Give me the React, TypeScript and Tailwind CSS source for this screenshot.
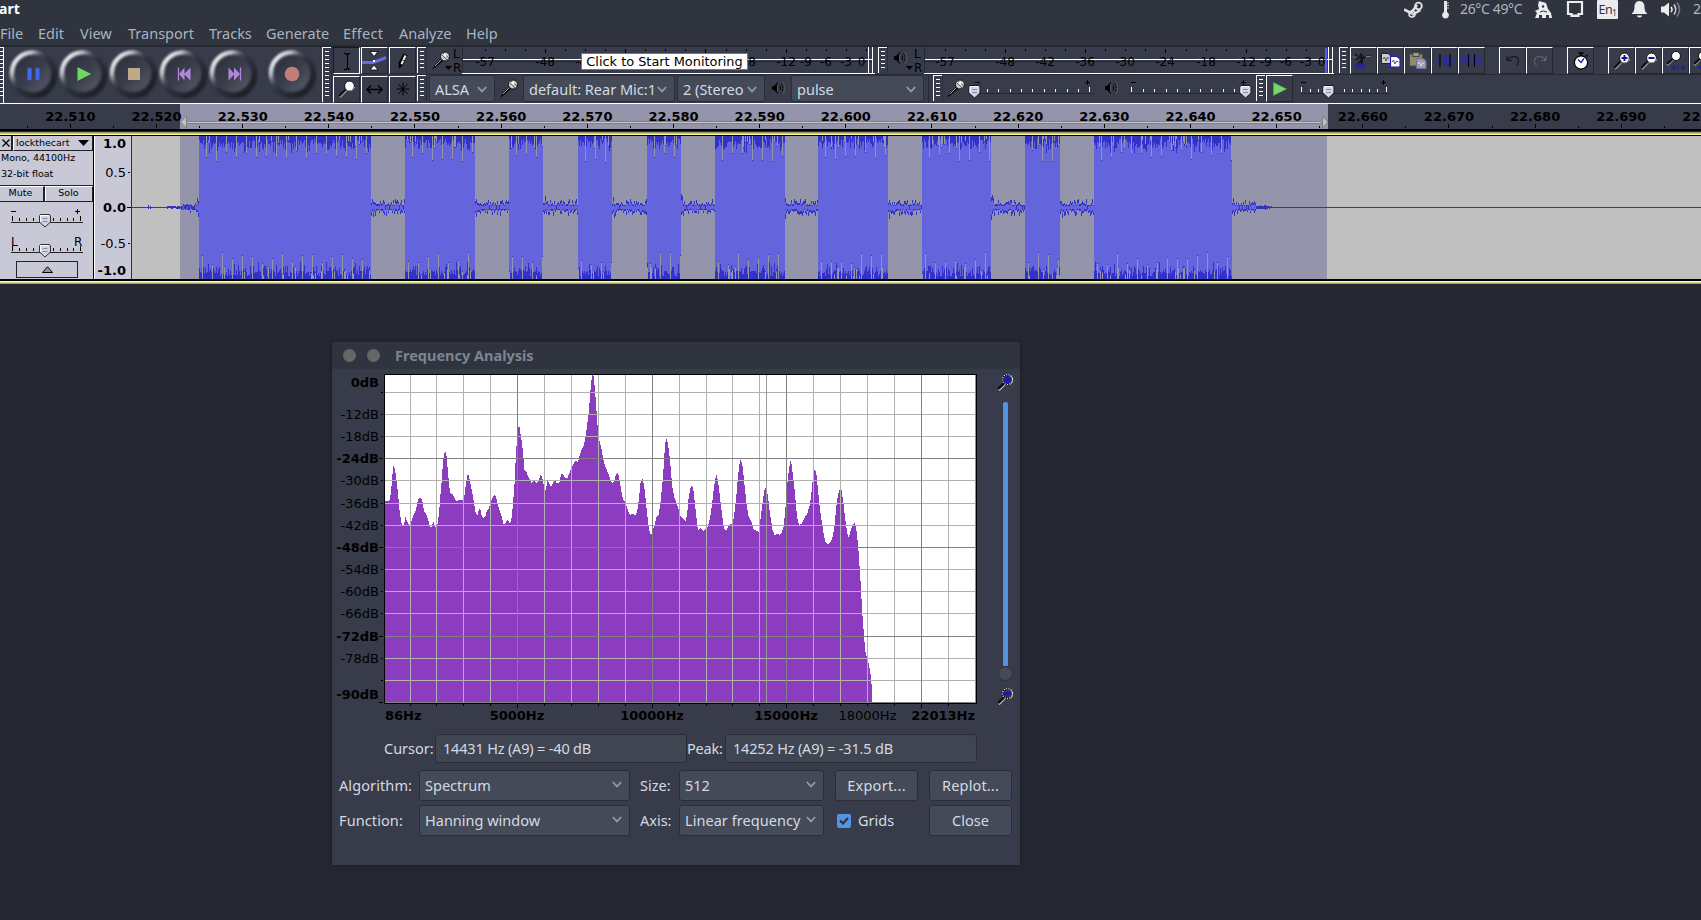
import React from "react";

const UI = "font-['Noto_Sans',sans-serif]";
const DV = "font-['DejaVu_Sans',sans-serif]";

/* ---------- helpers ---------- */

function rng(seed: number) {
  let s = seed;
  return () => {
    s = (s * 1664525 + 1013904223) % 4294967296;
    return s / 4294967296;
  };
}

function Grip({ tall = false }: { tall?: boolean }) {
  const n = tall ? 12 : 5;
  return (
    <svg width="10" height={tall ? 55 : 27} className="shrink-0" shapeRendering="crispEdges">
      <path d={`M0 0H9V1H1V${tall ? 55 : 26}H0Z`} fill="#fff" />
      {Array.from({ length: n }, (_, i) => (
        <rect key={i} x="3" y={4 + i * 4} width="4" height="1" fill="#fff" />
      ))}
      <rect x="9" y="0" width="1" height={tall ? 55 : 26} fill="#2a2d37" />
    </svg>
  );
}

function Tile({ children, pressed = false }: { children?: React.ReactNode; pressed?: boolean }) {
  return (
    <div
      className={
        pressed
          ? "flex h-[27px] w-[27px] shrink-0 items-center justify-center border border-t-[#15171d] border-l-[#15171d] border-r-white border-b-white"
          : "flex h-[27px] w-[27px] shrink-0 items-center justify-center border border-t-white border-l-white border-r-[#252831] border-b-[#252831]"
      }
    >
      {children}
    </div>
  );
}

/* ---------- icons ---------- */

function MicIcon() {
  return (
    <svg width="20" height="20" viewBox="0 0 20 20" className="shrink-0">
      <path d="M1 19L4 14L11 7L13 9L6 15Z" fill="#000" />
      <path d="M4 15L11 8" stroke="#a8a8a8" strokeWidth="1" />
      <circle cx="14" cy="5.500" r="4.500" fill="#cfcfcf" stroke="#111" strokeWidth="1" />
      <path d="M11 4L16 9M12 2L18 7" stroke="#555" strokeWidth="1" />
      <circle cx="14" cy="4" r="1.500" fill="#fff" />
    </svg>
  );
}

function SpeakerIcon() {
  return (
    <svg width="14" height="14" viewBox="0 0 14 14" className="shrink-0">
      <path d="M0 5H2L6 1V13L2 9H0Z" fill="#000" />
      <path d="M5.500 3V11" stroke="#6a6a6a" strokeWidth="0.800" />
      <path d="M8 4.500Q9.200 7 8 9.500" stroke="#000" strokeWidth="0.900" fill="none" />
      <path d="M9.500 2.500Q12.500 7 9.500 11.500" stroke="#000" strokeWidth="1" fill="none" strokeDasharray="2 1" />
      <path d="M11 1Q14.500 7 11 13" stroke="#8a8a8a" strokeWidth="0.700" fill="none" strokeDasharray="1 1" />
    </svg>
  );
}

function Magnifier({ sign = "" }: { sign?: "+" | "-" | "" }) {
  return (
    <svg width="18" height="18" viewBox="0 0 18 18" className="shrink-0">
      <path d="M1.500 16.500L8 10" stroke="#9a9a9a" strokeWidth="3.200" />
      <path d="M1 16L8 9" stroke="#0a0a0a" strokeWidth="2.200" />
      <circle cx="11.500" cy="6" r="4.900" fill="#fff" stroke="#111" strokeWidth="1" />
      <path d="M7.500 9A5.500 5.500 0 0 0 16.800 7" stroke="#bbb" strokeWidth="0.800" fill="none" />
      {sign === "+" && <path d="M8.500 6H14.500M11.500 3V9" stroke="#1414a0" strokeWidth="2" />}
      {sign === "-" && <path d="M8.500 6H14.500" stroke="#1414a0" strokeWidth="2" />}
    </svg>
  );
}

function DarkMagnifier({ plus = false }: { plus?: boolean }) {
  return (
    <svg width="17" height="17" viewBox="0 0 17 17" className="shrink-0">
      <path d="M1.500 16L8 9.500" stroke="#c8c4bc" strokeWidth="3" />
      <path d="M1 15L8 8.500" stroke="#0d0d12" strokeWidth="2.400" />
      <circle cx="10.500" cy="5.500" r="5" fill="#33364a" stroke="#101014" strokeWidth="1.200" />
      <circle cx="10.500" cy="5.500" r="5" fill="none" stroke="#f0f0f0" strokeWidth="1.200" strokeDasharray="1 1.400" />
      <path d="M13.500 1.500A5.500 5.500 0 0 1 13 10.500" stroke="#d8d4c8" strokeWidth="1" fill="none" />
      <path d={plus ? "M7 5.500H14M10.500 2V9" : "M7 5.500H14"} stroke="#1a1aa8" strokeWidth="3" />
    </svg>
  );
}

function Chevron() {
  return (
    <svg width="10" height="7" viewBox="0 0 10 7" className="shrink-0">
      <path d="M0.800 1L5 5.400L9.200 1" stroke="#979aa6" strokeWidth="1.700" fill="none" />
    </svg>
  );
}

function PlayTriangle() {
  return (
    <svg width="14" height="14" viewBox="0 0 14 14">
      <path d="M0.500 0.500L13.500 7L0.500 13.500Z" fill="#76d66c" stroke="#4fb048" strokeWidth="0.500" />
    </svg>
  );
}

/* ---------- title and menu ---------- */

const MENU = [
  { t: "File", c: "w-[38px]" },
  { t: "Edit", c: "w-[42px]" },
  { t: "View", c: "w-[48px]" },
  { t: "Transport", c: "w-[81px]" },
  { t: "Tracks", c: "w-[57px]" },
  { t: "Generate", c: "w-[77px]" },
  { t: "Effect", c: "w-[56px] tracking-[0.3px]" },
  { t: "Analyze", c: "w-[67px]" },
  { t: "Help", c: "w-[40px]" },
];

function TitleBar() {
  return (
    <div className={`${UI} flex h-[20px] items-center leading-[18px]`}>
      <span className="-ml-px w-[1406px] pb-[2px] text-[14px] font-bold text-white">art</span>
      <svg width="21" height="18" viewBox="0 0 21 18" className="mr-[17px] shrink-0">
        <path d="M0 8.500L7 12L13 4" stroke="#dcdde0" strokeWidth="2.600" fill="none" />
        <circle cx="14.500" cy="5" r="3.300" fill="none" stroke="#e6e6e8" strokeWidth="1.800" />
        <path d="M8 14L16.500 9" stroke="#dcdde0" strokeWidth="2.600" />
        <circle cx="8" cy="13" r="3" fill="none" stroke="#e6e6e8" strokeWidth="1.500" />
      </svg>
      <svg width="8" height="18" viewBox="0 0 8 18" className="mr-[10px] shrink-0">
        <path d="M2 0H5V11A3.400 3.400 0 1 1 2 11Z" fill="#e8e8ea" />
        <path d="M5 2H7M5 4.500H7M5 7H7" stroke="#e8e8ea" strokeWidth="0.800" />
      </svg>
      <span className="w-[74px] shrink-0 whitespace-nowrap pb-[2px] text-[14px] tracking-[-0.35px] text-[#aeb5c0]">26°C 49°C</span>
      <svg width="19" height="18" viewBox="0 0 19 18" className="mr-[13px] shrink-0">
        <path d="M5 0L12 2L14 8L17 12L18 17H15V14H12V17H8V14H5V17H1L3 12L1 10L5 8L4 4Z" fill="#ececee" />
        <circle cx="9" cy="5.500" r="1.200" fill="#2f343f" />
        <path d="M6 11Q9 9 13 11" stroke="#2f343f" fill="none" />
      </svg>
      <svg width="18" height="18" viewBox="0 0 18 18" className="mr-[13px] shrink-0">
        <path d="M2 1H16V13H12.500V15H5.500V13H2Z" fill="none" stroke="#ececee" strokeWidth="2.200" />
        <path d="M6 13.500H12V16H6Z" fill="#ececee" />
      </svg>
      <span className="mb-px mr-[13px] flex h-[19px] w-[21px] shrink-0 items-center justify-center rounded-[1px] bg-[#ececee] text-[12.5px] tracking-[-0.4px] text-[#2f343f]">
        En<span className="pt-[6px] text-[8px]">1</span>
      </span>
      <svg width="17" height="18" viewBox="0 0 17 18" className="mr-[13px] shrink-0">
        <path d="M8.500 0C12 0 13.500 3 13.500 6C13.500 10 15 11.500 16.500 13H0.500C2 11.500 3.500 10 3.500 6C3.500 3 5 0 8.500 0Z" fill="#ececee" />
        <path d="M6 14.500H11A2.500 2 0 0 1 6 14.500Z" fill="#ececee" />
      </svg>
      <svg width="21" height="18" viewBox="0 0 21 18" className="mr-[11px] shrink-0">
        <path d="M0 5.500H3L8 1.500V15.500L3 11.500H0Z" fill="#ececee" />
        <path d="M10 6Q12 8.500 10 11" stroke="#ececee" strokeWidth="1.600" fill="none" />
        <path d="M13 3.500Q16.500 8.500 13 13.500" stroke="#c8cacf" strokeWidth="1.600" fill="none" />
        <path d="M16 1.500Q21 8.500 16 15.500" stroke="#777b85" strokeWidth="1.600" fill="none" />
      </svg>
      <span className="shrink-0 pb-[2px] text-[14px] text-[#aeb5c0]">2</span>
    </div>
  );
}

/* ---------- transport ---------- */

function RoundButton({ children, last = false }: { children: React.ReactNode; last?: boolean }) {
  return (
    <svg width="50" height="55" viewBox="0 0 50 55" className={last ? "ml-[9px] shrink-0" : "shrink-0"}>
      <circle cx="25.500" cy="27.500" r="21" fill="none" stroke="url(#rimDark)" strokeWidth="6" filter="url(#soft)" />
      <circle cx="24.500" cy="26.500" r="18" fill="url(#face)" filter="url(#soft)" />
      <circle cx="24.500" cy="26" r="20.500" fill="none" stroke="url(#rimLight)" strokeWidth="4.500" filter="url(#soft)" />
      {children}
    </svg>
  );
}

function Transport() {
  return (
    <div className="flex w-[311px] shrink-0">
      <svg width="0" height="0" className="absolute">
        <defs>
          <filter id="soft" x="-20%" y="-20%" width="140%" height="140%">
            <feGaussianBlur stdDeviation="0.900" />
          </filter>
          <linearGradient id="rimLight" x1="0.080" y1="0.120" x2="0.700" y2="0.700">
            <stop offset="0" stopColor="#f4f4f4" />
            <stop offset="0.250" stopColor="#c0c1c6" />
            <stop offset="0.500" stopColor="#555966" stopOpacity="0.500" />
            <stop offset="0.700" stopColor="#383c4a" stopOpacity="0" />
          </linearGradient>
          <linearGradient id="rimDark" x1="0.200" y1="0.200" x2="0.850" y2="0.850">
            <stop offset="0" stopColor="#383c4a" stopOpacity="0" />
            <stop offset="0.500" stopColor="#2e313c" />
            <stop offset="1" stopColor="#1f2129" />
          </linearGradient>
          <linearGradient id="face" x1="0.150" y1="0.150" x2="0.850" y2="0.850">
            <stop offset="0" stopColor="#30333f" />
            <stop offset="0.500" stopColor="#383c4a" />
            <stop offset="1" stopColor="#50545f" />
          </linearGradient>
        </defs>
      </svg>
      <RoundButton>
        <path d="M19.500 21H23.500V33H19.500ZM27.500 21H31.500V33H27.500Z" fill="#4169f0" stroke="#3555b8" strokeWidth="1" />
      </RoundButton>
      <RoundButton>
        <path d="M19.500 20L33 27L19.500 34Z" fill="#6fd664" />
      </RoundButton>
      <RoundButton>
        <path d="M20 21H32V33H20Z" fill="#bcab86" />
      </RoundButton>
      <RoundButton>
        <path d="M20.500 20.500V33.500" stroke="#b385dc" strokeWidth="1.300" />
        <path d="M26.500 20.500V33.500L21 27ZM32.500 20.500V33.500L26 27Z" fill="#b385dc" />
      </RoundButton>
      <RoundButton>
        <path d="M32.500 20.500V33.500" stroke="#b385dc" strokeWidth="1.300" />
        <path d="M20.500 20.500V33.500L26.500 27ZM26 20.500V33.500L32 27Z" fill="#b385dc" />
      </RoundButton>
      <RoundButton last>
        <circle cx="25" cy="27" r="7.300" fill="#c07d7a" />
      </RoundButton>
    </div>
  );
}

function Tools() {
  return (
    <div className="ml-px grid w-[84px] shrink-0 grid-cols-3 grid-rows-2 gap-y-px">
      <Tile pressed>
        <svg width="8" height="18" viewBox="0 0 8 18" shapeRendering="crispEdges">
          <path d="M1 1H3V2H5V1H7M1 17H3V16H5V17H7" stroke="#000" fill="none" />
          <path d="M4 2V16" stroke="#000" />
        </svg>
      </Tile>
      <Tile>
        <svg width="25" height="20" viewBox="0 0 25 20">
          <path d="M0 11.500H11L18 9L24 6.500" stroke="#6a6ae0" strokeWidth="3" fill="none" />
          <path d="M8 0.500H16L12 5.500ZM8 19L12 14L16 19Z" fill="#fff" stroke="#000" strokeWidth="0.800" />
          <rect x="11" y="9" width="2" height="2" fill="#fff" />
        </svg>
      </Tile>
      <Tile>
        <svg width="12" height="18" viewBox="0 0 12 18">
          <path d="M2 17L1.500 11L6.500 1.500L10.500 3.500L6 13Z" fill="#000" />
          <path d="M3.500 12L7.500 3L9.500 4L5.500 12.500Z" fill="#f0f0f0" />
          <path d="M5.500 8L7.500 9" stroke="#000" strokeWidth="0.800" />
        </svg>
      </Tile>
      <Tile>
        <Magnifier />
      </Tile>
      <Tile>
        <svg width="17" height="9" viewBox="0 0 17 9">
          <path d="M1 4.500H16M5 0.500L1 4.500L5 8.500M12 0.500L16 4.500L12 8.500" stroke="#000" strokeWidth="1.500" fill="none" />
        </svg>
      </Tile>
      <Tile>
        <svg width="14" height="14" viewBox="0 0 14 14">
          <path d="M7 0.500V13.500M0.500 7H13.500M2.500 2L11.500 12M11.500 2L2.500 12" stroke="#000" strokeWidth="1" />
        </svg>
      </Tile>
    </div>
  );
}

/* ---------- meters ---------- */

function Meter({ zero, width, clip = false }: { zero: number; width: number; clip?: boolean }) {
  const dbs = Array.from({ length: 20 }, (_, i) => -57 + i * 3);
  const labels = [-57, -48, -42, -36, -30, -24, -18, -12, -9, -6, -3, 0];
  return (
    <svg width={width} height="27" className="shrink-0">
      <g shapeRendering="crispEdges">
        <rect x="0" y="0" width="1" height="26" fill="#262932" />
        <rect x="1" y="12" width={width - 5} height="1" fill="#fff" />
        <rect x="1" y="14" width={width - 5} height="1" fill="#24272f" />
        <rect x="0" y="26" width={width - 2} height="1" fill="#fff" />
        {dbs.map((d) => (
          <rect key={d} x={Math.round(zero + d * 6.69)} y="2" width="1" height={d % 12 === 0 && d !== 0 ? 4 : 2} fill="#000" />
        ))}
        {clip && <rect x={zero - 1} y="1" width="2" height="25" fill="#5c5cf0" />}
        <rect x={zero + 2} y="0" width="1" height="27" fill="#fff" />
        <rect x={zero + 6} y="0" width="1" height="27" fill="#fff" />
      </g>
      {labels.map((d) => (
        <text
          key={d}
          x={d === 0 ? zero - 0.5 : Math.round(zero + d * 6.69)}
          y="18.500"
          textAnchor={d === 0 ? "end" : "middle"}
          className="fill-black font-['DejaVu_Sans',sans-serif] text-[12px]"
        >
          {d}
        </text>
      ))}
    </svg>
  );
}

function MeterButton({ kind }: { kind: "mic" | "speaker" }) {
  return (
    <div className={kind === "mic" ? "flex w-[35px] shrink-0" : "flex w-[36px] shrink-0"}>
      <div className="flex w-[25px] flex-col items-end pt-[4px]">
        <div className={kind === "mic" ? "mr-[1px] h-[15px]" : "mr-[5px] h-[15px]"}>{kind === "mic" ? <MicIcon /> : <SpeakerIcon />}</div>
        <svg width="7" height="4" viewBox="0 0 7 4">
          <path d="M0 0H7L3.500 4Z" fill="#000" />
        </svg>
      </div>
      <div className={`${DV} flex flex-col pl-px text-[12px] leading-[14px] text-black`}>
        <span>L</span>
        <span>R</span>
      </div>
    </div>
  );
}

/* ---------- sliders ---------- */

function TickSlider({
  width,
  ticks,
  thumb,
  tall,
  light = false,
  minus,
  plus,
}: {
  width: number;
  ticks: number[];
  thumb: number;
  tall: number[];
  light?: boolean;
  minus?: number;
  plus?: number;
}) {
  const ink = light ? "#000" : "#fff";
  return (
    <svg width={width} height="27" className="shrink-0 overflow-visible">
      <g shapeRendering="crispEdges">
        <rect x="0" y="18" width={width} height="1" fill={light ? "#222" : "#262932"} />
        {ticks.map((t) => (
          <rect key={t} x={t} y={tall.includes(t) ? 12 : 14} width="1" height={tall.includes(t) ? 5 : 3} fill={ink} />
        ))}
        {minus !== undefined && <rect x={minus} y="7" width="5" height="1" fill="#000" />}
        {plus !== undefined && <path d={`M${plus} 7H${plus + 2}V5H${plus + 3}V7H${plus + 5}V8H${plus + 3}V10H${plus + 2}V8H${plus}Z`} fill="#000" />}
      </g>
      <path
        d={`M${thumb - 4} 10.500H${thumb + 5}L${thumb + 6} 12V18L${thumb + 0.5} 23L${thumb - 5} 18V12Z`}
        fill="#d4d4e8"
        stroke={light ? "#333" : "#16181e"}
      />
      <path d={`M${thumb - 4} 18V11.500H${thumb + 4}`} stroke="#fff" fill="none" />
      <path d={`M${thumb - 2} 14.500H${thumb + 3}M${thumb - 2} 17.500H${thumb + 3}`} stroke="#888aa8" />
    </svg>
  );
}

function Combo({ text, cls, txt = "" }: { text: string; cls: string; txt?: string }) {
  return (
    <div className={`${UI} flex shrink-0 items-center justify-between overflow-hidden rounded-[3px] border border-[#2b2e39] bg-[#444a58] pl-[5px] text-[14.5px] text-[#d3dae3] ${cls}`}>
      <span className={`whitespace-nowrap ${txt}`}>{text}</span>
      <Chevron />
    </div>
  );
}

/* ---------- edit toolbar ---------- */

function EditTools() {
  return (
    <div className="flex shrink-0">
      <Tile>
        <svg width="20" height="18" viewBox="0 0 20 18" className="-ml-[3px]">
          <path d="M0 5H3L4 2L5 8L6.500 3L8 7L9 1L10 11L11 3L12 7L14 4H19" stroke="#111" strokeWidth="0.900" fill="none" />
          <path d="M0 5H5M14 4.500H19" stroke="#777" />
          <path d="M6 12L10 7M10 12L8.500 9" stroke="#000" />
          <circle cx="5.500" cy="14" r="2" fill="none" stroke="#1c1cc0" strokeWidth="1.100" />
          <circle cx="10.500" cy="14" r="2" fill="none" stroke="#1c1cc0" strokeWidth="1.100" />
        </svg>
      </Tile>
      <Tile>
        <svg width="20" height="15" viewBox="0 0 20 15">
          <path d="M0.500 0.500H7L10 3V10.500H0.500Z" fill="#ccc" stroke="#222" />
          <path d="M2 6L3.500 4L5 8L6.500 4L8 6" stroke="#555" fill="none" />
          <path d="M9.500 3.500H16L19 6V14H9.500Z" fill="#fff" stroke="#1c1cc8" strokeWidth="1.200" />
          <path d="M11 9L12.500 7L14 11L15.500 8L17.500 9" stroke="#555" fill="none" />
        </svg>
      </Tile>
      <Tile>
        <svg width="18" height="17" viewBox="0 0 18 17">
          <rect x="0.500" y="2" width="13" height="12" fill="#8f8c6c" stroke="#4a4a3c" />
          <rect x="4" y="0.500" width="6" height="4" fill="#9b9b8b" stroke="#4a4a3c" />
          <path d="M7.500 6.500H14L17 9V16.500H7.500Z" fill="#9c9cae" stroke="#6f6f9c" />
          <path d="M9 12L10.500 10L12 14L13.500 11L15.500 12" stroke="#ddd" fill="none" />
        </svg>
      </Tile>
      <Tile>
        <svg width="20" height="15" viewBox="0 0 20 15">
          <path d="M0 7.500H4.500M15.500 7.500H20" stroke="#2424c8" strokeWidth="1.200" />
          <path d="M5 1V14M15 1V14" stroke="#000" strokeWidth="1.100" />
          <path d="M7 8V2.500H8.500V12.500H10V2.500H11.500V12.500H13V7" stroke="#2424c8" strokeWidth="0.900" fill="none" />
        </svg>
      </Tile>
      <Tile>
        <svg width="21" height="15" viewBox="0 0 21 15">
          <path d="M1 11V3H3V11H5V3H6.500M14.500 11H16V3H18V11H20V5M8 7.500H13" stroke="#2424c8" strokeWidth="1" fill="none" />
          <path d="M7.500 1V14M13.500 1V14" stroke="#000" strokeWidth="1.100" />
        </svg>
      </Tile>
      <div className="w-[14px]" />
      <Tile>
        <svg width="14" height="11" viewBox="0 0 14 11">
          <path d="M1 0.500V5.500H6M1.500 5C5 0 13 0.500 12.500 6.500Q12.500 9 10.500 10.500" stroke="#15161b" strokeWidth="1.100" fill="none" />
        </svg>
      </Tile>
      <Tile>
        <svg width="14" height="11" viewBox="0 0 14 11">
          <path d="M13 0.500V5.500H8M12.500 5C9 0 1 0.500 1.500 6.500Q1.500 9 3.500 10.500" stroke="#6d707a" strokeWidth="1.100" fill="none" strokeDasharray="2 0.600" />
        </svg>
      </Tile>
      <div className="w-[14px]" />
      <Tile>
        <svg width="16" height="18" viewBox="0 0 16 18">
          <path d="M5.500 1H10.500M8 1V4M13 3L14.500 4.500" stroke="#000" strokeWidth="1.600" />
          <circle cx="8" cy="10.500" r="6.600" fill="#fff" stroke="#000" strokeWidth="1.200" />
          <path d="M5 7.500L8 10.500L11 6.500" stroke="#2020b0" strokeWidth="1.400" fill="none" />
        </svg>
      </Tile>
      <div className="w-[14px]" />
      <Tile>
        <Magnifier sign="+" />
      </Tile>
      <Tile>
        <Magnifier sign="-" />
      </Tile>
      {[0, 1].map((i) => (
        <Tile key={i}>
          <svg width="20" height="20" viewBox="0 0 20 20">
            <path d="M1 14L6.500 8.500" stroke="#999" strokeWidth="3" />
            <path d="M1 13L7 7.500" stroke="#0a0a0a" strokeWidth="2.200" />
            <circle cx="10" cy="5" r="4.500" fill="#fff" stroke="#111" />
            <path d="M6 16.500H12M9 14L6 16.500L9 19M14 16.500H19M16 14L19 16.500L16 19M12 14V19" stroke="#1c1cb0" strokeWidth="1.200" fill="none" />
          </svg>
        </Tile>
      ))}
    </div>
  );
}

function Toolbars() {
  return (
    <div className="relative flex h-[56px] w-[1720px] bg-[#383c4a]">
      <div className="w-[4px] shrink-0 overflow-hidden border-r border-white">
        <div className="-ml-[4px]">
          <Grip tall />
        </div>
      </div>
      <div className="ml-[4px] mr-[3px] flex">
        <Transport />
      </div>
      <Grip tall />
      <Tools />
      <div className="flex flex-col">
        <div className="flex h-[28px] border-b border-[#262932]">
          <Grip />
          <MeterButton kind="mic" />
          <Meter zero={404} width={415} />
          <div className="ml-[1px]">
            <Grip />
          </div>
          <MeterButton kind="speaker" />
          <Meter zero={402} width={412} clip />
          <div className="ml-[3px] mr-px">
            <Grip />
          </div>
          <EditTools />
        </div>
        <div className="flex h-[27px]">
          <Grip />
          <Combo text="ALSA" cls="ml-[2px] w-[66px] pr-[7px] pt-[2px]" />
          <div className="ml-[4px] mr-[4px] pt-[4px]">
            <MicIcon />
          </div>
          <Combo text="default: Rear Mic:1" cls="w-[152px] pr-[7px] pt-[2px]" />
          <Combo text="2 (Stereo" cls="ml-[2px] w-[88px] pr-[7px] pt-[2px]" />
          <div className="ml-[7px] mr-[5px] pt-[6px]">
            <SpeakerIcon />
          </div>
          <Combo text="pulse" cls="w-[133px] pr-[7px] pt-[2px]" />
          <div className="ml-[4px] mr-[4px] w-px bg-[#262932]" />
          <Grip />
          <div className="ml-[3px] mr-[3px] pt-[4px]">
            <MicIcon />
          </div>
          <TickSlider width={124} thumb={5} minus={6} plus={116} tall={[120]} ticks={[18, 29, 41, 52, 63, 75, 86, 98, 109, 120]} />
          <div className="ml-[12px] mr-[12px] pt-[6px]">
            <SpeakerIcon />
          </div>
          <TickSlider width={119} thumb={114} minus={0} plus={110} tall={[0]} ticks={[0, 12, 23, 35, 46, 58, 69, 80, 92, 103]} />
          <div className="ml-[6px]">
            <Grip />
          </div>
          <Tile>
            <PlayTriangle />
          </Tile>
          <div className="ml-[8px]">
            <TickSlider width={88} thumb={27} minus={0} plus={80} tall={[0, 85]} ticks={[0, 9, 17, 43, 51, 60, 68, 76, 85]} />
          </div>
        </div>
      </div>
      <div className={`${DV} absolute left-[581px] top-[6px] flex h-[17px] w-[167px] items-center justify-center whitespace-nowrap border border-[#777] bg-white text-[12.9px] text-black`}>
        Click to Start Monitoring
      </div>
    </div>
  );
}

/* ---------- timeline ---------- */

function Timeline() {
  const marks = Array.from({ length: 20 }, (_, i) => i);
  return (
    <svg width="1701" height="29" className="block shrink-0">
      <g shapeRendering="crispEdges">
        <rect x="0" y="0" width="1701" height="29" fill="#383c4a" />
        <rect x="180" y="1" width="1148" height="25" fill="#9494aa" />
        <rect x="0" y="0" width="1701" height="1" fill="#fff" />
        <rect x="0" y="26" width="1701" height="2" fill="#000" />
        <rect x="0" y="28" width="1701" height="1" fill="#2c2e30" />
        {marks.map((i) => (
          <rect key={i} x={Math.round(69.8 + i * 86.16)} y="21" width="1" height="4" fill="#000" />
        ))}
        {marks.map((i) => (
          <rect key={i} x={Math.round(26.8 + i * 86.16)} y="23" width="1" height="2" fill="#000" />
        ))}
      </g>
      <path d="M187 19.500H1321" stroke="#808080" strokeWidth="3" />
      <path d="M187 19.500H1321" stroke="#c8c8c8" strokeWidth="1" />
      <path d="M186.500 13V25L180.500 19Z" fill="#c0c0c0" stroke="#808080" />
      <path d="M1322.500 13V25L1328 19Z" fill="#c0c0c0" stroke="#808080" />
      {marks.map((i) => (
        <text key={i} x={70.4 + i * 86.16} y="18" textAnchor="middle" className="fill-black font-['DejaVu_Sans',sans-serif] text-[13px] font-bold">
          {(22.51 + i * 0.01).toFixed(3)}
        </text>
      ))}
    </svg>
  );
}

/* ---------- track ---------- */

const BURSTS: [number, number][] = [
  [199, 371],
  [405, 475],
  [509, 543],
  [578, 612],
  [647, 681],
  [715, 785],
  [818, 888],
  [922, 991],
  [1025, 1060],
  [1094, 1232],
];

function buildWave() {
  const rand = rng(77);
  let body = "";
  let peaks = "";
  let gaps = "";
  for (const [a, b] of BURSTS) {
    body += `M${a} 0H${b}V143H${a}Z`;
    for (let x = a; x < b; x++) {
      for (const top of [true, false]) {
        const r = rand();
        const depth = r < 0.5 ? 3 + Math.floor(rand() * 6) : r < 0.92 ? 6 + Math.floor(rand() * 8) : 12 + Math.floor(rand() * 6);
        peaks += top ? `M${x} 0h1v${depth}h-1Z` : `M${x} 143h1v-${depth}h-1Z`;
        const beat = (x - a + (top ? 3 : 7)) % 10 === 0;
        if (beat || rand() < 0.12) {
          const g = beat ? 14 + Math.floor(rand() * 13) : 3 + Math.floor(rand() * 10);
          gaps += top ? `M${x} 0h1v${g}h-1Z` : `M${x} 143h1v-${g}h-1Z`;
          peaks += top ? `M${x} ${g}h1v1h-1Z` : `M${x} ${142 - g}h1v1h-1Z`;
        }
      }
    }
  }
  let quiet = "";
  let quietCore = "";
  const swing = () => {
    const r = rand();
    return 0.4 + r * r * 1.3;
  };
  const put = (x: number, amp: number) => {
    const u = Math.max(0, Math.round(amp * swing()));
    const d = Math.max(0, Math.round(amp * swing()));
    quiet += `M${x} ${71 - u}h1v${u + d + 1}h-1Z`;
    if (u + d > 4) quietCore += `M${x} ${71 - Math.floor(u * 0.6)}h1v${Math.floor(u * 0.6) + Math.floor(d * 0.6) + 1}h-1Z`;
  };
  for (let x = 132; x < 199; x++) put(x, x < 167 ? (x === 148 || x === 150 ? 1.5 : 0) : x < 180 ? 0.9 : x < 197 ? 1 + (x - 180) * 0.2 : 9);
  for (let i = 0; i < BURSTS.length - 1; i++) {
    const s = BURSTS[i][1];
    const e = BURSTS[i + 1][0];
    for (let x = s; x < e; x++) put(x, x - s < 3 ? 8 : 4.8);
  }
  for (let x = 1232; x < 1701; x++) put(x, x < 1235 ? 9 : x < 1256 ? 4 : x < 1273 ? 2.6 - (x - 1256) * 0.15 : 0);
  return { body, peaks, gaps, quiet, quietCore };
}

const WAVE = buildWave();

function Waveform() {
  return (
    <svg width="1569" height="143" viewBox="132 0 1569 143" shapeRendering="crispEdges" className="block shrink-0">
      <rect x="132" y="0" width="1569" height="143" fill="#c0c0c0" />
      <rect x="180" y="0" width="1147" height="143" fill="#9494aa" />
      <path d={WAVE.body} fill="#6464dc" />
      <path d={WAVE.peaks} fill="#3232c8" />
      <path d={WAVE.gaps} fill="#9494aa" />
      <path d={WAVE.quiet} fill="#3232c8" />
      <path d={WAVE.quietCore} fill="#6464dc" />
    </svg>
  );
}

function TrackPanel() {
  return (
    <div className={`${DV} flex h-[143px] w-[93px] shrink-0 flex-col bg-[#c8c8d7] text-[9.5px] leading-[12px] text-black`}>
      <div className="flex h-[15px]">
        <div className="flex w-[13px] items-center justify-center border-b border-r-2 border-[#22242c]">
          <svg width="8" height="8" viewBox="0 0 8 8">
            <path d="M0.500 0.500L7.500 7.500M7.500 0.500L0.500 7.500" stroke="#000" strokeWidth="1.300" />
          </svg>
        </div>
        <div className="flex flex-1 items-center justify-between border-b border-l border-r border-b-[#22242c] border-l-white border-r-[#22242c] pl-[2px] pr-[3px]">
          <span>lockthecart</span>
          <svg width="11" height="6" viewBox="0 0 11 6">
            <path d="M0 0H11L5.500 6Z" fill="#000" />
          </svg>
        </div>
      </div>
      <div className="h-[16px] pl-px pt-px">Mono, 44100Hz</div>
      <div className="h-[18px] pl-px pt-[1px]">32-bit float</div>
      <div className="flex h-[17px] border-b border-t border-[#22242c]">
        <div className="flex w-[45px] items-center justify-center border-r-2 border-t border-r-[#22242c] border-t-white pb-[2px] pr-[2px]">Mute</div>
        <div className="flex flex-1 items-center justify-center border-l border-r border-t border-l-white border-r-[#22242c] border-t-white pb-[2px] pr-px">Solo</div>
      </div>
      <div className="ml-[11px] mt-[2px] h-[27px]">
        <TickSlider light width={72} thumb={33.5} minus={0} plus={64} tall={[1, 69]} ticks={[1, 8, 15, 22, 42, 49, 56, 62, 69]} />
      </div>
      <div className="relative ml-[11px] mt-[3px] h-[27px]">
        <TickSlider light width={72} thumb={33.5} tall={[1, 69]} ticks={[1, 8, 15, 22, 42, 49, 56, 62, 69]} />
        <span className="absolute left-0 top-px text-[12px] leading-[14px]">L</span>
        <span className="absolute left-[63px] top-px text-[12px] leading-[14px]">R</span>
      </div>
      <div className="ml-[16px] flex h-[17px] w-[62px] shrink-0 items-center justify-center border border-[#22242c]">
        <svg width="11" height="7" viewBox="0 0 11 7">
          <path d="M0.500 6.500H10.500L5.500 0.800Z" fill="#9494aa" stroke="#000" />
        </svg>
      </div>
    </div>
  );
}

function VerticalRuler() {
  const rows = [
    { t: "1.0", y: 12, b: true },
    { t: "0.5", y: 41, b: false },
    { t: "0.0", y: 76, b: true },
    { t: "-0.5", y: 112, b: false },
    { t: "-1.0", y: 139, b: true },
  ];
  return (
    <svg width="39" height="143" className="block shrink-0">
      <rect width="39" height="143" fill="#c8c8d7" />
      <g shapeRendering="crispEdges">
        <rect width="1" height="143" fill="#000" />
        <rect x="1" width="1" height="143" fill="#fff" />
        <rect x="35" y="36" width="2" height="1" fill="#000" />
        <rect x="34" y="71" width="4" height="1" fill="#000" />
        <rect x="35" y="107" width="2" height="1" fill="#000" />
        <rect x="38" width="1" height="143" fill="#30323a" />
      </g>
      {rows.map((r) => (
        <text
          key={r.t}
          x="33"
          y={r.y}
          textAnchor="end"
          className={r.b ? "fill-black font-['DejaVu_Sans',sans-serif] text-[13px] font-bold" : "fill-black font-['DejaVu_Sans',sans-serif] text-[13px]"}
        >
          {r.t}
        </text>
      ))}
    </svg>
  );
}

/* ---------- frequency analysis ---------- */

/* Spectrum envelope; both halves are in thirds of a pixel. */
const LOW_HALF = [
  165, 484, 177, 484, 180, 475, 183, 453, 186, 425, 188, 396, 191, 375, 195, 388, 198, 410, 202, 443, 205, 472, 208, 505, 211, 528, 215, 551, 219, 556,
  223, 550, 226, 531, 230, 541, 235, 552, 240, 556, 244, 546, 248, 532, 253, 520, 258, 508, 261, 492, 264, 478, 270, 473, 276, 478, 279, 493, 282, 515,
  288, 522, 293, 535, 299, 556, 303, 564, 307, 552, 310, 543, 314, 556, 320, 567, 324, 545, 328, 508, 331, 468, 335, 423, 338, 380, 341, 350, 344, 336,
  348, 336, 350, 352, 352, 376, 355, 408, 358, 440, 362, 460, 368, 463, 374, 476, 380, 483, 388, 480, 400, 480, 404, 462, 408, 428, 412, 405, 415, 402,
  419, 420, 423, 440, 428, 465, 432, 490, 437, 518, 442, 528, 447, 508, 451, 508, 455, 526, 460, 534, 466, 530, 470, 515, 476, 505, 481, 490, 486, 476,
  490, 468, 495, 465, 499, 475, 502, 492, 508, 510, 514, 525, 520, 552, 526, 550, 532, 538, 540, 552, 546, 528, 549, 485, 552, 455, 555, 408, 557, 355,
  560, 310, 564, 262, 569, 262, 572, 285, 576, 310, 579, 340, 583, 388, 590, 398, 596, 412, 604, 430, 612, 422, 620, 430, 627, 420, 631, 405, 636, 408,
  641, 435, 645, 458, 649, 440, 653, 422, 658, 432, 664, 440, 670, 428, 675, 422, 680, 430, 688, 428, 693, 403, 698, 402, 704, 412, 712, 414, 718, 400,
  725, 382, 732, 368, 738, 362, 743, 367, 748, 350, 755, 328, 762, 315, 767, 290, 772, 250, 776, 222, 779, 182, 783, 130, 787, 104, 791, 108, 794, 140,
  798, 190, 802, 250, 808, 300, 815, 330, 822, 370, 830, 388, 838, 410, 846, 430, 853, 422, 857, 405, 863, 400, 867, 410, 872, 440, 878, 475, 886, 487,
  893, 510, 900, 525, 908, 522, 918, 525, 924, 500, 928, 465, 932, 425, 937, 414, 942, 435, 947, 480, 951, 520, 956, 558, 960, 580, 965, 583, 968, 570,
  974, 552, 980, 528, 986, 525, 991, 490, 995, 450, 999, 410, 1003, 345, 1007, 300, 1011, 296, 1015, 320, 1020, 360, 1024, 410, 1028, 450, 1034, 475,
  1042, 495,
];
const HIGH_HALF = [
  0, 525, 8, 535, 18, 543, 22, 515, 25, 480, 29, 455, 33, 437, 37, 440, 41, 455, 44, 485, 48, 520, 52, 560, 56, 570, 62, 565, 70, 572, 78, 567, 84, 558,
  90, 535, 95, 500, 100, 458, 105, 420, 110, 402, 114, 425, 118, 455, 122, 490, 127, 530, 132, 568, 140, 570, 146, 558, 152, 550, 158, 556, 163, 520,
  168, 480, 172, 430, 177, 380, 182, 357, 187, 375, 191, 410, 195, 450, 200, 495, 206, 530, 214, 545, 220, 567, 230, 573, 236, 576, 240, 550, 245, 510,
  250, 470, 255, 443, 259, 443, 264, 470, 268, 505, 273, 540, 278, 572, 284, 585, 292, 582, 300, 585, 306, 575, 311, 560, 315, 520, 318, 480, 322, 430,
  327, 385, 331, 363, 335, 372, 339, 410, 344, 450, 348, 500, 352, 535, 357, 555, 364, 552, 370, 540, 376, 530, 382, 520, 388, 500, 393, 470, 397, 430,
  401, 400, 404, 387, 409, 400, 413, 440, 418, 490, 423, 530, 428, 560, 432, 590, 437, 608, 445, 612, 453, 605, 458, 590, 463, 563, 467, 520, 471, 480,
  475, 460, 479, 448, 484, 448, 489, 480, 493, 515, 498, 555, 503, 585, 506, 592, 511, 575, 517, 557, 524, 548, 528, 560, 532, 595, 535, 625, 538, 670,
  541, 715, 544, 770, 547, 820, 550, 862, 553, 900, 557, 940, 561, 955, 565, 968, 569, 985, 573, 1010, 575, 1040, 576, 1088,
];

function spectrumPath() {
  const pts: [number, number][] = [];
  for (let i = 0; i < LOW_HALF.length; i += 2) pts.push([LOW_HALF[i] / 3 - 2, LOW_HALF[i + 1] / 3 - 2]);
  for (let i = 0; i < HIGH_HALF.length; i += 2) pts.push([HIGH_HALF[i] / 3 + 348, HIGH_HALF[i + 1] / 3 - 2]);
  let d = "M53 361";
  let k = 0;
  for (let x = 53; x < 540; x++) {
    while (k < pts.length - 2 && pts[k + 1][0] < x + 0.5) k++;
    const [x0, y0] = pts[k];
    const [x1, y1] = pts[k + 1];
    const t = Math.min(1, Math.max(0, (x + 0.5 - x0) / (x1 - x0)));
    d += `V${Math.round(y0 + (y1 - y0) * t)}H${x + 1}`;
  }
  return d + "V361Z";
}

const SPECTRUM = spectrumPath();

/* Plot coordinates are relative to the dialog's left edge and top edge. */
const COLS: [number, boolean][] = [
  [78, false], [104, false], [131, false], [158, false], [185, true], [212, false], [239, false], [266, false], [293, false], [320, true], [347, false],
  [374, false], [400, false], [427, false], [454, true], [481, false], [508, false], [535, false], [562, false], [589, true], [616, false],
];
const ROWS: [number, string, boolean][] = [
  [50, "", false], [72, "-12dB", false], [94, "-18dB", false], [116, "-24dB", true], [138, "-30dB", false], [161, "-36dB", false], [183, "-42dB", false],
  [205, "-48dB", true], [227, "-54dB", false], [249, "-60dB", false], [271, "-66dB", false], [294, "-72dB", true], [316, "-78dB", false], [338, "", false],
  [360, "", true],
];

function Plot() {
  const label = (b: boolean) =>
    b ? "fill-black font-['DejaVu_Sans',sans-serif] text-[13px] font-bold" : "fill-black font-['DejaVu_Sans',sans-serif] text-[13px]";
  return (
    <svg width="660" height="358" viewBox="0 27 660 358" className="block shrink-0">
      <g shapeRendering="crispEdges">
        <rect x="52" y="32" width="593" height="330" fill="#000" />
        <rect x="53" y="33" width="591" height="328" fill="#fff" />
        <path d={SPECTRUM} fill="#8c3cbe" />
        {ROWS.map(([y, , b]) => (
          <g key={y}>
            {!b && <rect x="53" y={y} width="591" height="1" fill="#b0b0b0" />}
            <rect x={b ? 47 : 49} y={y} width={b ? 4 : 2} height="1" fill="#000" />
          </g>
        ))}
        {COLS.map(([x, b]) => (
          <g key={x}>
            <rect x={x} y="33" width="1" height="328" fill={b ? "#808080" : "#b0b0b0"} />
            <rect x={x} y="362" width="1" height={b ? 4 : 2} fill="#000" />
          </g>
        ))}
        {ROWS.filter((r) => r[2]).map(([y]) => (
          <rect key={y} x="53" y={y} width="591" height="1" fill="#808080" />
        ))}
        <rect x="434" y="33" width="1" height="328" fill="#989898" />
        <rect x="643" y="33" width="1" height="328" fill="#909090" />
      </g>
      <text x="47" y="45" textAnchor="end" className={label(true)}>0dB</text>
      {ROWS.filter((r) => r[1]).map(([y, t, b]) => (
        <text key={y} x="47" y={y + 5} textAnchor="end" className={label(b)}>
          {t}
        </text>
      ))}
      <text x="47" y="357" textAnchor="end" className={label(true)}>-90dB</text>
      <text x="53" y="378" className={label(true)}>86Hz</text>
      <text x="185" y="378" textAnchor="middle" className={label(true)}>5000Hz</text>
      <text x="320" y="378" textAnchor="middle" className={label(true)}>10000Hz</text>
      <text x="454" y="378" textAnchor="middle" className={label(true)}>15000Hz</text>
      <text x="535.500" y="378" textAnchor="middle" className={label(false)}>18000Hz</text>
      <text x="643" y="378" textAnchor="end" className={label(true)}>22013Hz</text>
    </svg>
  );
}

const FIELD = "flex h-[29px] shrink-0 items-center whitespace-nowrap rounded-[3px] border border-[#2b2e39] bg-[#404552] pl-[7px]";
const BUTTON = "flex h-[31px] w-[83px] shrink-0 items-center justify-center rounded-[3px] border border-[#2b2e39] bg-[#444a58]";

function FrequencyDialog() {
  return (
    <div className={`${UI} absolute left-[332px] top-[342px] flex h-[523px] w-[688px] flex-col overflow-hidden rounded-t-[4px] bg-[#383c4a] text-[14.5px] leading-[20px] text-[#d3dae3] shadow-[0_0_5px_rgba(0,0,0,0.35)]`}>
      <div className="flex h-[27px] shrink-0 items-center bg-[#2f343f] pl-[11px]">
        <div className="h-[13px] w-[13px] rounded-full bg-[#666]" />
        <div className="ml-[11px] h-[13px] w-[13px] rounded-full bg-[#666]" />
        <span className="ml-[15px] pb-[2px] text-[14.5px] font-bold text-[#7c8593]">Frequency Analysis</span>
      </div>
      <div className="flex h-[358px] shrink-0">
        <Plot />
        <div className="flex w-[26px] flex-col items-center pt-[5px]">
          <DarkMagnifier plus />
          <div className="mt-[11px] h-[264px] w-[5px] rounded-t-[2px] bg-[#5294e2]" />
          <div className="h-[15px] w-[15px] rounded-full border border-[#2b2e39] bg-[#444a58]" />
          <div className="mt-[7px]">
            <DarkMagnifier />
          </div>
        </div>
      </div>
      <div className="ml-[52px] mt-[7px] flex items-center">
        <span className="-mt-[2px] w-[51px]">Cursor:</span>
        <div className={`${FIELD} w-[252px] pb-[2px] tracking-[-0.18px]`}>14431 Hz (A9) = -40 dB</div>
        <span className="-mt-[2px] w-[38px] tracking-[-0.2px]">Peak:</span>
        <div className={`${FIELD} w-[252px] pb-[2px] tracking-[-0.18px]`}>14252 Hz (A9) = -31.5 dB</div>
      </div>
      <div className="ml-[7px] mt-[7px] flex items-center">
        <span className="-mt-[2px] w-[80px] tracking-[0.1px]">Algorithm:</span>
        <Combo text="Spectrum" cls="h-[31px] w-[211px] pb-[2px] pr-[7px]" />
        <span className="-mt-[2px] ml-[10px] w-[39px]">Size:</span>
        <Combo text="512" cls="h-[31px] w-[145px] pb-[2px] pr-[7px]" />
        <div className={`${BUTTON} ml-[11px] pb-[2px] tracking-[0.25px]`}>Export...</div>
        <div className={`${BUTTON} ml-[11px] pb-[2px] tracking-[0.15px]`}>Replot...</div>
      </div>
      <div className="ml-[7px] mt-[4px] flex items-center">
        <span className="-mt-[2px] w-[80px] tracking-[0.1px]">Function:</span>
        <Combo text="Hanning window" cls="h-[31px] w-[211px] pb-[2px] pr-[7px]" />
        <span className="-mt-[2px] ml-[10px] w-[39px]">Axis:</span>
        <Combo text="Linear frequency" cls="h-[31px] w-[145px] pb-[2px] pr-[7px]" txt="tracking-[0.05px]" />
        <div className="ml-[13px] flex h-[14px] w-[14px] items-center justify-center rounded-[2px] bg-[#5294e2]">
          <svg width="10" height="8" viewBox="0 0 10 8">
            <path d="M1 3.500L4 6.500L9 1" stroke="#2b2e39" strokeWidth="2" fill="none" />
          </svg>
        </div>
        <span className="-mt-[2px] ml-[7px] w-[71px]">Grids</span>
        <div className={`${BUTTON} pb-[2px]`}>Close</div>
      </div>
    </div>
  );
}

export default function App() {
  return (
    <div className="relative flex h-[920px] w-[1701px] flex-col overflow-hidden bg-[#252830]">
      <div className="h-[45px] shrink-0 bg-[#2f343f]">
        <TitleBar />
        <nav className={`${UI} flex h-[25px] items-center text-[14.5px] leading-[20px] text-[#aab3c0]`}>
          {MENU.map((m) => (
            <span key={m.t} className={`${m.c} shrink-0`}>
              {m.t}
            </span>
          ))}
        </nav>
      </div>
      <div className="h-[2px] shrink-0 bg-[#262932]" />
      <Toolbars />
      <Timeline />
      <div className="h-[1px] shrink-0 bg-[#94947c]" />
      <div className="h-[1px] shrink-0 bg-[#c4c492]" />
      <div className="h-[1px] shrink-0 bg-[#ffff80]" />
      <div className="h-[1px] shrink-0 bg-black" />
      <div className="flex shrink-0">
        <TrackPanel />
        <VerticalRuler />
        <Waveform />
      </div>
      <div className="h-[2px] shrink-0 bg-black" />
      <div className="h-[1px] shrink-0 bg-[#ffff80]" />
      <div className="h-[1px] shrink-0 bg-[#d8d88c]" />
      <div className="h-[1px] shrink-0 bg-[#a0a080]" />
      <FrequencyDialog />
    </div>
  );
}
